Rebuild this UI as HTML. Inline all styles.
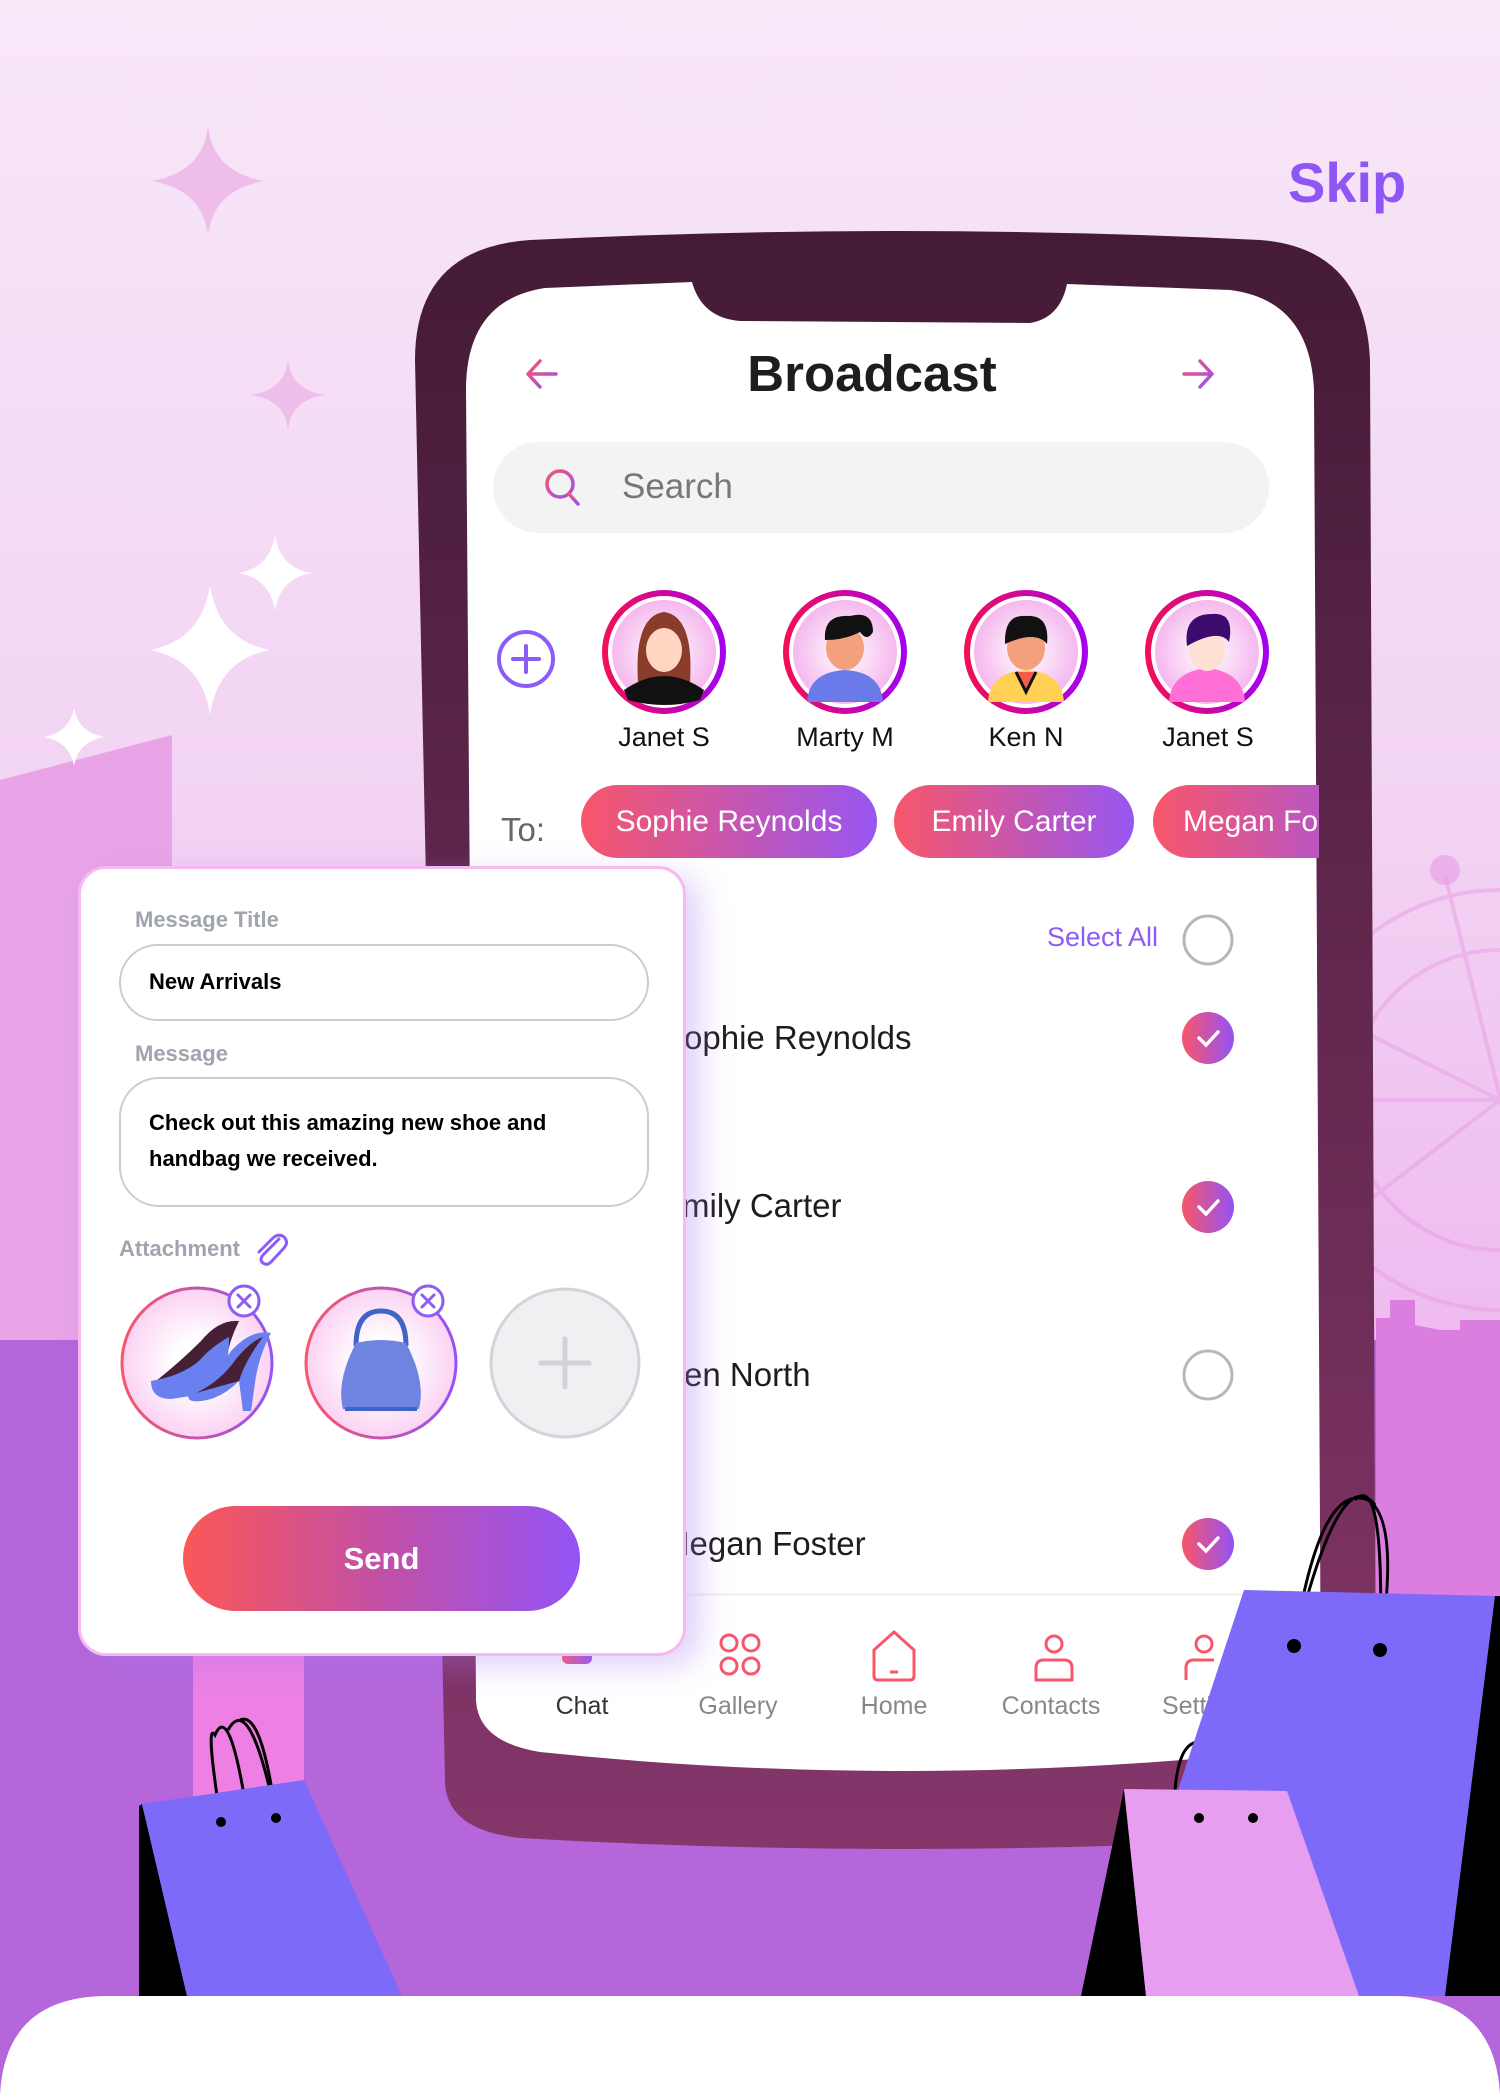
<!DOCTYPE html>
<html><head><meta charset="utf-8">
<style>
*{margin:0;padding:0;box-sizing:border-box}
body{width:1500px;height:2100px;overflow:hidden;position:relative;font-family:"Liberation Sans",sans-serif;background:linear-gradient(180deg,#f8e8f8 0%,#f2d2f3 40%,#eeb4ee 70%,#e9a3e8 100%)}
.abs{position:absolute}
.t{position:absolute;white-space:nowrap}
</style></head><body>
<svg class="abs" style="left:0;top:0" width="1500" height="2100">
  <defs>
    <linearGradient id="ph" x1="0" y1="0" x2="0" y2="1"><stop offset="0" stop-color="#441b36"/><stop offset="1" stop-color="#85366b"/></linearGradient>
  </defs>
  <polygon points="0,780 172,735 172,1340 0,1340" fill="#e8a4e6"/>
  <rect x="0" y="1340" width="1500" height="760" fill="#b466da"/>
  <g stroke="#e79ae4" stroke-width="4" fill="none" opacity="0.45">
    <circle cx="1500" cy="1100" r="210"/><circle cx="1500" cy="1100" r="150"/>
    <line x1="1445" y1="875" x2="1555" y2="1320"/><line x1="1300" y1="1000" x2="1700" y2="1200"/><line x1="1290" y1="1100" x2="1710" y2="1100"/><line x1="1330" y1="1230" x2="1670" y2="970"/>
  </g>
  <circle cx="1445" cy="870" r="15" fill="#e79ae4" opacity="0.6"/>
  <polygon points="1376,1318 1390,1318 1390,1300 1415,1300 1415,1325 1440,1330 1460,1330 1460,1320 1500,1320 1500,1800 1376,1800" fill="#dc7de0"/>
  <rect x="193" y="1640" width="111" height="170" fill="#ee80e4"/>
  <path d="M208,126 Q213,172 264,181 Q213,190 208,236 Q203,190 152,181 Q203,172 208,126Z" fill="#efbde9"/>
  <path d="M288,360 Q291,390 325,395 Q291,400 288,430 Q285,400 251,395 Q285,390 288,360Z" fill="#efbde9"/>
  <path d="M210,585 Q218,640 270,650 Q218,660 210,715 Q202,660 150,650 Q202,640 210,585Z" fill="#fff"/>
  <path d="M275,535 Q280,568 312,573 Q280,578 275,611 Q270,578 238,573 Q270,568 275,535Z" fill="#fff"/>
  <path d="M74,708 Q78,732 104,737 Q78,742 74,766 Q70,742 44,737 Q70,732 74,708Z" fill="#fff"/>
  <path d="M415,360 Q415,248 530,240 Q900,222 1260,240 Q1365,248 1370,360 L1376,1770 Q1376,1834 1300,1838 Q900,1860 520,1838 Q445,1830 445,1780 Z" fill="url(#ph)"/>
  <path d="M466,390 Q466,300 545,288 L692,282 Q702,318 740,321 L1030,323 Q1060,318 1067,284 L1230,290 Q1310,300 1314,390 L1321,1720 Q1321,1745 1270,1752 Q900,1790 540,1752 Q478,1742 476,1700 Z" fill="#fff"/>
</svg>

<div class="t" style="left:1288px;top:150px;font-size:56px;font-weight:bold;color:#8f56f5">Skip</div>

<svg class="abs" style="left:522px;top:354px" width="40" height="40" viewBox="0 0 40 40"><defs><linearGradient id="ag" x1="0" y1="0" x2="1" y2="1"><stop offset="0" stop-color="#f9546b"/><stop offset="1" stop-color="#9a4ff2"/></linearGradient></defs><path d="M34,20 H6 M18,7 L6,20 L18,33" stroke="url(#ag)" stroke-width="3.5" fill="none" stroke-linecap="round" stroke-linejoin="round"/></svg>
<svg class="abs" style="left:1178px;top:354px" width="40" height="40" viewBox="0 0 40 40"><path d="M6,20 H34 M22,7 L34,20 L22,33" stroke="url(#ag)" stroke-width="3.5" fill="none" stroke-linecap="round" stroke-linejoin="round"/></svg>
<div class="t" style="left:672px;top:344px;width:400px;text-align:center;font-size:51px;font-weight:bold;color:#1d1d1d">Broadcast</div>

<div class="abs" style="left:493px;top:442px;width:776px;height:91px;border-radius:46px;background:#f3f3f3"></div>
<svg class="abs" style="left:542px;top:466px" width="42" height="42" viewBox="0 0 42 42"><circle cx="18" cy="18" r="13" stroke="url(#ag)" stroke-width="3.5" fill="none"/><path d="M27,28 L36,38" stroke="url(#ag)" stroke-width="3.5" stroke-linecap="round"/></svg>
<div class="t" style="left:622px;top:467px;font-size:35px;color:#777">Search</div>

<svg class="abs" style="left:490px;top:580px" width="800" height="140">
  <defs>
    <linearGradient id="rg" x1="0" y1="0" x2="1" y2="0"><stop offset="0" stop-color="#f40f54"/><stop offset="1" stop-color="#a200f0"/></linearGradient>
    <radialGradient id="bg"><stop offset="0" stop-color="#fff"/><stop offset="1" stop-color="#f5b8ee"/></radialGradient>
  </defs>
  <circle cx="36" cy="79" r="27" stroke="#8b5cf6" stroke-width="4" fill="none"/>
  <path d="M36,66 V92 M23,79 H49" stroke="#8b5cf6" stroke-width="4" stroke-linecap="round"/>
  <g transform="translate(174,72)">
    <circle r="62" fill="url(#rg)"/><circle r="56" fill="#fff"/><circle r="52" fill="url(#bg)"/>
    <path d="M-26,30 Q-30,-36 0,-40 Q30,-36 26,30Z" fill="#8a3b2a"/>
    <ellipse cx="0" cy="-2" rx="18" ry="22" fill="#ffd6c2"/>
    <path d="M-40,38 Q0,10 40,38 L36,48 Q0,58 -36,48Z" fill="#111"/>
  </g>
  <g transform="translate(355,72)">
    <circle r="62" fill="url(#rg)"/><circle r="56" fill="#fff"/><circle r="52" fill="url(#bg)"/>
    <path d="M-38,50 Q-36,20 0,18 Q36,20 38,50Z" fill="#6a7ae8"/>
    <ellipse cx="0" cy="-4" rx="19" ry="22" fill="#f4a07c"/>
    <path d="M-20,-12 Q-22,-38 5,-36 Q28,-42 28,-20 Q22,-10 15,-20 Q0,-12 -20,-12Z" fill="#111"/>
  </g>
  <g transform="translate(536,72)">
    <circle r="62" fill="url(#rg)"/><circle r="56" fill="#fff"/><circle r="52" fill="url(#bg)"/>
    <path d="M-38,50 Q-36,20 0,18 Q36,20 38,50Z" fill="#ffd054"/>
    <path d="M-10,20 L0,40 L10,20" fill="#f35b4b" stroke="#111" stroke-width="3"/>
    <ellipse cx="0" cy="-4" rx="19" ry="22" fill="#f4a07c"/>
    <path d="M-21,-8 Q-22,-38 0,-36 Q24,-38 21,-8 Q10,-22 -21,-8Z" fill="#111"/>
  </g>
  <g transform="translate(717,72)">
    <circle r="62" fill="url(#rg)"/><circle r="56" fill="#fff"/><circle r="52" fill="url(#bg)"/>
    <path d="M-38,50 Q-36,20 0,16 Q36,20 38,50Z" fill="#ff6fd6"/>
    <ellipse cx="0" cy="-2" rx="18" ry="21" fill="#ffe0d4"/>
    <path d="M-20,-6 Q-24,-38 5,-38 Q28,-40 22,-10 Q12,-24 -20,-6Z" fill="#3d0b6e"/>
  </g>
</svg>
<div class="t" style="left:604px;top:722px;width:120px;text-align:center;font-size:27px;color:#111">Janet S</div>
<div class="t" style="left:785px;top:722px;width:120px;text-align:center;font-size:27px;color:#111">Marty M</div>
<div class="t" style="left:966px;top:722px;width:120px;text-align:center;font-size:27px;color:#111">Ken N</div>
<div class="t" style="left:1148px;top:722px;width:120px;text-align:center;font-size:27px;color:#111">Janet S</div>

<div class="t" style="left:501px;top:811px;font-size:33px;color:#666">To:</div>
<div class="abs" style="left:466px;top:780px;width:853px;height:82px;overflow:hidden">
  <div class="t" style="left:115px;top:5px;width:296px;height:73px;border-radius:37px;background:linear-gradient(90deg,#f8566a,#9756f2);color:#fff;font-size:30px;line-height:73px;text-align:center">Sophie Reynolds</div>
  <div class="t" style="left:428px;top:5px;width:240px;height:73px;border-radius:37px;background:linear-gradient(90deg,#f8566a,#9756f2);color:#fff;font-size:30px;line-height:73px;text-align:center">Emily Carter</div>
  <div class="t" style="left:687px;top:5px;width:260px;height:73px;border-radius:37px;background:linear-gradient(90deg,#f8566a,#9756f2);color:#fff;font-size:30px;line-height:73px;padding-left:30px">Megan Foster</div>
</div>

<div class="t" style="left:1000px;top:922px;width:158px;text-align:right;font-size:27px;color:#8b5cf6">Select All</div>
<svg class="abs" style="left:1180px;top:912px" width="60" height="660">
  <defs><linearGradient id="cg" x1="0" y1="0" x2="1" y2="0"><stop offset="0" stop-color="#f9566a"/><stop offset="1" stop-color="#9353f4"/></linearGradient></defs>
  <circle cx="28" cy="28" r="24" stroke="#b7b7b7" stroke-width="3" fill="none"/>
  <circle cx="28" cy="126" r="26" fill="url(#cg)"/><path d="M19,126 L26,133 L38,120" stroke="#fff" stroke-width="3.5" fill="none" stroke-linecap="round"/>
  <circle cx="28" cy="295" r="26" fill="url(#cg)"/><path d="M19,295 L26,302 L38,289" stroke="#fff" stroke-width="3.5" fill="none" stroke-linecap="round"/>
  <circle cx="28" cy="463" r="24" stroke="#b7b7b7" stroke-width="3" fill="none"/>
  <circle cx="28" cy="632" r="26" fill="url(#cg)"/><path d="M19,632 L26,639 L38,626" stroke="#fff" stroke-width="3.5" fill="none" stroke-linecap="round"/>
</svg>
<div class="t" style="left:662px;top:1019px;font-size:33px;color:#1d1d1d">Sophie Reynolds</div>
<div class="t" style="left:660px;top:1187px;font-size:33px;color:#1d1d1d">Emily Carter</div>
<div class="t" style="left:662px;top:1356px;font-size:33px;color:#1d1d1d">Ken North</div>
<div class="t" style="left:662px;top:1525px;font-size:33px;color:#1d1d1d">Megan Foster</div>
<div class="abs" style="left:476px;top:1593px;width:845px;height:3px;background:#f4f4f6"></div>

<svg class="abs" style="left:540px;top:1630px" width="700" height="70" fill="none" stroke="#f8566a" stroke-width="3">
  <rect x="22" y="2" width="30" height="32" rx="6" fill="url(#cg)" stroke="none"/>
  <circle cx="189" cy="13" r="8"/><circle cx="211" cy="13" r="8"/><circle cx="189" cy="36" r="8"/><circle cx="211" cy="36" r="8"/>
  <path d="M334,20 L354,2 L374,20 V46 Q374,50 370,50 H338 Q334,50 334,46 Z"/><path d="M350,42 H358"/>
  <circle cx="514" cy="14" r="8"/><path d="M496,50 V38 Q496,30 504,30 H524 Q532,30 532,38 V50 Z"/>
  <circle cx="664" cy="14" r="8"/><path d="M646,50 V38 Q646,30 654,30 H674"/>
</svg>
<div class="t" style="left:532px;top:1692px;width:100px;text-align:center;font-size:25px;color:#333">Chat</div>
<div class="t" style="left:688px;top:1692px;width:100px;text-align:center;font-size:25px;color:#888">Gallery</div>
<div class="t" style="left:844px;top:1692px;width:100px;text-align:center;font-size:25px;color:#888">Home</div>
<div class="t" style="left:991px;top:1692px;width:120px;text-align:center;font-size:25px;color:#888">Contacts</div>
<div class="t" style="left:1162px;top:1692px;font-size:25px;color:#888">Settings</div>

<div class="abs" style="left:78px;top:866px;width:608px;height:790px;border-radius:28px;background:#fff;border:3px solid #f6b9f1;box-shadow:14px 10px 30px rgba(170,120,240,0.35)">
  <div class="t" style="left:54px;top:38px;font-size:22px;font-weight:bold;color:#a0a4ae">Message Title</div>
  <div class="abs" style="left:38px;top:75px;width:530px;height:77px;border-radius:39px;border:2px solid #c9ccd4"></div>
  <div class="t" style="left:68px;top:100px;font-size:22px;font-weight:bold;color:#000">New Arrivals</div>
  <div class="t" style="left:54px;top:172px;font-size:22px;font-weight:bold;color:#a0a4ae">Message</div>
  <div class="abs" style="left:38px;top:208px;width:530px;height:130px;border-radius:40px;border:2px solid #c9ccd4"></div>
  <div class="abs" style="left:68px;top:236px;font-size:22px;font-weight:bold;color:#000;line-height:36px">Check out this amazing new shoe and<br>handbag we received.</div>
  <div class="t" style="left:38px;top:367px;font-size:22px;font-weight:bold;color:#a0a4ae">Attachment</div>
  <svg class="abs" style="left:170px;top:360px" width="40" height="40" viewBox="0 0 40 40"><path d="M28,10 L12,26 Q8,31 12,34 Q16,37 20,33 L33,19 Q38,13 33,8 Q28,4 22,9 L8,23" stroke="#8b5cf6" stroke-width="3" fill="none" stroke-linecap="round"/></svg>
  <svg class="abs" style="left:30px;top:412px" width="560" height="170">
    <defs>
      <radialGradient id="pg"><stop offset="0.3" stop-color="#fff"/><stop offset="1" stop-color="#fbd2f3"/></radialGradient>
      <linearGradient id="og" x1="0" y1="0" x2="1" y2="0"><stop offset="0" stop-color="#f9566a"/><stop offset="1" stop-color="#9353f4"/></linearGradient>
    </defs>
    <circle cx="86" cy="82" r="75" fill="url(#pg)" stroke="url(#og)" stroke-width="3"/>
    <path d="M45,100 Q70,80 90,60 Q108,38 128,40 Q118,60 115,80 L108,110 Q95,110 85,112 Z" fill="#452037"/>
    <path d="M40,100 Q70,95 88,80 Q100,66 118,56 Q118,80 112,110 L60,118 Q40,118 40,100Z" fill="#6a80f0"/>
    <path d="M78,112 Q105,96 120,70 Q140,48 160,52 Q150,70 145,95 L140,130 H132 L128,100 Q110,118 90,120 Q74,122 78,112Z" fill="#6a80f0"/>
    <path d="M85,112 Q110,100 125,78 Q140,60 152,56 Q134,80 128,100Z" fill="#452037"/>
    <circle cx="270" cy="82" r="75" fill="url(#pg)" stroke="url(#og)" stroke-width="3"/>
    <path d="M245,65 Q245,30 270,30 Q295,30 295,65" stroke="#3f64c8" stroke-width="5" fill="none"/>
    <path d="M245,62 Q225,100 232,128 H308 Q315,100 295,62 Q270,56 245,62Z" fill="#6d84e0"/>
    <rect x="234" y="126" width="72" height="4" fill="#3f64c8"/>
    <circle cx="454" cy="82" r="74" fill="#f0f0f2" stroke="#d3d4da" stroke-width="3"/>
    <path d="M454,58 V106 M430,82 H478" stroke="#d1d3d9" stroke-width="5" stroke-linecap="round"/>
    <circle cx="133" cy="20" r="15" fill="#fff" stroke="#8b5cf6" stroke-width="3"/><path d="M127,14 L139,26 M139,14 L127,26" stroke="#8b5cf6" stroke-width="3" stroke-linecap="round"/>
    <circle cx="317" cy="20" r="15" fill="#fff" stroke="#8b5cf6" stroke-width="3"/><path d="M311,14 L323,26 M323,14 L311,26" stroke="#8b5cf6" stroke-width="3" stroke-linecap="round"/>
  </svg>
  <div class="abs" style="left:102px;top:637px;width:397px;height:105px;border-radius:53px;background:linear-gradient(90deg,#fb5757,#c250a6 50%,#9454f6);color:#fff;font-size:31px;font-weight:bold;text-align:center;line-height:105px">Send</div>
</div>

<svg class="abs" style="left:0;top:0" width="1500" height="2100">
  <g fill="none" stroke="#000" stroke-width="3">
    <path d="M221,1822 Q205,1720 215,1735 Q230,1700 248,1820"/><path d="M276,1818 Q250,1690 228,1730"/><path d="M276,1818 Q262,1710 240,1720"/>
    <path d="M1294,1646 Q1320,1480 1368,1500 Q1400,1520 1380,1650"/><path d="M1380,1650 Q1385,1470 1355,1500"/><path d="M1294,1646 Q1340,1460 1375,1505"/>
    <path d="M1199,1816 Q1190,1730 1215,1740 Q1240,1745 1255,1816"/><path d="M1175,1790 Q1180,1730 1210,1745"/>
  </g>
  <polygon points="139,1806 142,1804 187,1996 139,1996" fill="#000"/>
  <polygon points="142,1804 304,1780 402,1996 187,1996" fill="#7e6af9"/>
  <circle cx="221" cy="1822" r="5"/><circle cx="276" cy="1818" r="5"/>
  <polygon points="1244,1590 1495,1596 1500,1600 1500,1996 1445,1996 1360,1996 1110,1996" fill="#7e6af9"/>
  <polygon points="1495,1596 1500,1596 1500,1996 1445,1996" fill="#000"/>
  <circle cx="1294" cy="1646" r="7"/><circle cx="1380" cy="1650" r="7"/>
  <polygon points="1124,1789 1081,1996 1146,1996" fill="#000"/>
  <polygon points="1124,1789 1287,1791 1359,1996 1146,1996" fill="#e79ef1"/>
  <circle cx="1199" cy="1818" r="5"/><circle cx="1253" cy="1818" r="5"/>
  <path d="M0,2100 V2095 Q5,1995 110,1996 H1390 Q1495,1995 1500,2095 V2100Z" fill="#fff"/>
</svg>
</body></html>
